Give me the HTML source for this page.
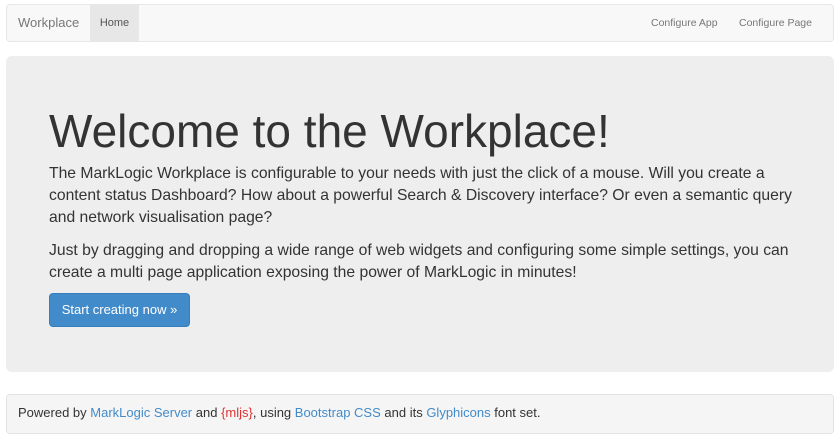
<!DOCTYPE html>
<html><head><meta charset="utf-8"><style>
*{margin:0;padding:0;box-sizing:border-box}
body{width:840px;height:424px;background:#fff;font-family:"Liberation Sans",sans-serif;color:#333;overflow:hidden;position:relative}
.nav{position:absolute;left:6px;top:4px;width:828px;height:38px;background:#f8f8f8;border:1px solid #e7e7e7;border-radius:4px}
.brand{position:absolute;left:11px;top:10px;font-size:13px;color:#777}
.home{position:absolute;left:83px;top:0;width:49px;height:36px;background:#e7e7e7;color:#555;font-size:11px;line-height:36px;text-align:center}
.nl{position:absolute;top:0;line-height:36px;font-size:10.5px;color:#777}
.jumbo{position:absolute;left:6px;top:56px;width:828px;height:316px;background:#eee;border-radius:6px}
h1{position:absolute;left:43px;top:47px;font-size:46px;font-weight:normal;white-space:nowrap;line-height:56px}
p{position:absolute;left:43px;font-size:15.7px;line-height:22px;white-space:nowrap}
.btn{position:absolute;left:43px;top:237px;width:141px;height:34px;background:#428bca;border:1px solid #357ebd;border-radius:4px;color:#fff;font-size:13px;line-height:32px;text-align:center}
.foot{position:absolute;left:6px;top:394px;width:828px;height:40px;background:#f5f5f5;border:1px solid #e3e3e3;border-radius:4px;font-size:13px;color:#333;padding:10px 0 0 11px}
a{color:#428bca;text-decoration:none}
</style></head><body>
<div class="nav"><span class="brand">Workplace</span><span class="home">Home</span><span class="nl" style="left:644px">Configure App</span><span class="nl" style="left:732px">Configure Page</span></div>
<div class="jumbo">
<h1>Welcome to the Workplace!</h1>
<p style="top:107px">The MarkLogic Workplace is configurable to your needs with just the click of a mouse. Will you create a<br>content status Dashboard? How about a powerful Search &amp; Discovery interface? Or even a semantic query<br>and network visualisation page?</p>
<p style="top:184px">Just by dragging and dropping a wide range of web widgets and configuring some simple settings, you can<br>create a multi page application exposing the power of MarkLogic in minutes!</p>
<div class="btn">Start creating now »</div>
</div>
<div class="foot">Powered by <a>MarkLogic Server</a> and <span style="color:#d33">{mljs}</span>, using <a>Bootstrap CSS</a> and its <a>Glyphicons</a> font set.</div>
</body></html>
